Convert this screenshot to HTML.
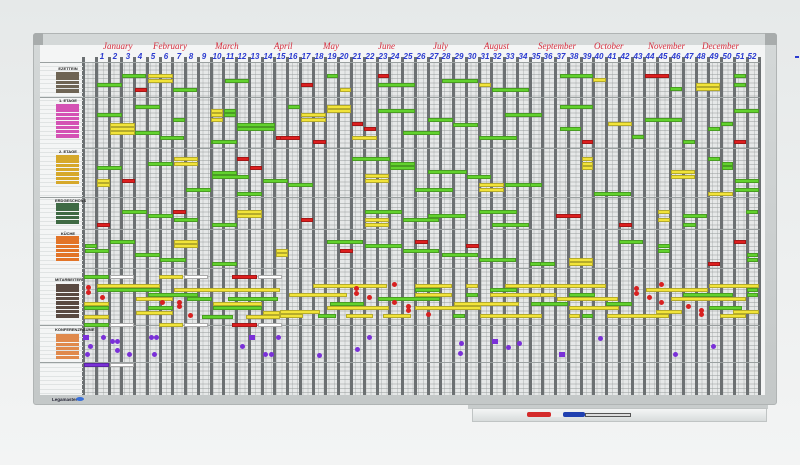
<!DOCTYPE html>
<html><head><meta charset="utf-8">
<style>
*{margin:0;padding:0;box-sizing:border-box}
body{width:800px;height:465px;overflow:hidden;background:linear-gradient(#e6e9e9,#eef0f0 60%,#f3f4f4);position:relative;font-family:"Liberation Sans",sans-serif}
.abs{position:absolute}
#frame{left:33px;top:33px;width:744px;height:372px;background:linear-gradient(#d4d8d8,#c4c8c8);border:1px solid #b0b4b4;border-radius:3px}
#board{left:40px;top:45px;width:725px;height:350px;background:#f4f5f5}
#grid{left:83px;top:62px;width:677px;height:333px;
background:
 repeating-linear-gradient(90deg,transparent 0,transparent 4.25px,rgba(150,155,155,.35) 4.25px,rgba(150,155,155,.35) 5.25px),
 repeating-linear-gradient(180deg,transparent 0,transparent 3.3px,rgba(140,145,145,.45) 3.3px,rgba(140,145,145,.45) 4.3px),
 #e6e8e8}
.vl{position:absolute;top:57px;width:3px;height:338px;background:#6c7072}
.hl{position:absolute;left:40px;width:720px;height:1px;background:#9aa0a0}
.b{position:absolute;height:4px;border:1px solid rgba(0,0,0,.25)}
.g{background:#62d22e}.y{background:#f2e43a}.r{background:#dd1f1f}
.d{position:absolute;width:5px;height:5px;border-radius:50%;background:#d82020}
.p{position:absolute;width:5px;height:5px;border-radius:50%;background:#7a30d8}
.tag{position:absolute;height:4px;background:#fff;border:1px solid #aaa}
.m{position:absolute;top:41px;color:#d62a3a;font:italic 9px "Liberation Serif",serif;white-space:nowrap}
.n{position:absolute;top:52px;width:12px;text-align:center;color:#2a3ad0;font:italic bold 8px "Liberation Sans",sans-serif}
.lt{position:absolute;left:55px;width:26px;text-align:center;font:bold 4px "Liberation Sans",sans-serif;color:#222}
.lb{position:absolute;left:56px;width:23px;height:3.5px}
</style></head><body>
<div class="abs" id="frame"></div>
<div class="abs" style="left:33px;top:33px;width:10px;height:12px;background:#a8acac;border-radius:3px 0 0 0"></div>
<div class="abs" style="left:765px;top:33px;width:12px;height:12px;background:#a8acac;border-radius:0 3px 0 0"></div>
<div class="abs" id="board"></div>
<div class="abs" id="grid"></div>
<div id="lines"></div>

<div class="m" style="left:103px">January</div>
<div class="m" style="left:153px">February</div>
<div class="m" style="left:215px">March</div>
<div class="m" style="left:274px">April</div>
<div class="m" style="left:323px">May</div>
<div class="m" style="left:378px">June</div>
<div class="m" style="left:433px">July</div>
<div class="m" style="left:484px">August</div>
<div class="m" style="left:538px">September</div>
<div class="m" style="left:594px">October</div>
<div class="m" style="left:648px">November</div>
<div class="m" style="left:702px">December</div>

<div id="nums">
<div class="n" style="left:96px">1</div><div class="n" style="left:109px">2</div><div class="n" style="left:122px">3</div><div class="n" style="left:134px">4</div><div class="n" style="left:147px">5</div><div class="n" style="left:160px">6</div><div class="n" style="left:173px">7</div><div class="n" style="left:185px">8</div><div class="n" style="left:198px">9</div><div class="n" style="left:211px">10</div><div class="n" style="left:224px">11</div><div class="n" style="left:236px">12</div><div class="n" style="left:249px">13</div><div class="n" style="left:262px">14</div><div class="n" style="left:275px">15</div><div class="n" style="left:287px">16</div><div class="n" style="left:300px">17</div><div class="n" style="left:313px">18</div><div class="n" style="left:326px">19</div><div class="n" style="left:338px">20</div><div class="n" style="left:351px">21</div><div class="n" style="left:364px">22</div><div class="n" style="left:377px">23</div><div class="n" style="left:389px">24</div><div class="n" style="left:402px">25</div><div class="n" style="left:415px">26</div><div class="n" style="left:428px">27</div><div class="n" style="left:440px">28</div><div class="n" style="left:453px">29</div><div class="n" style="left:466px">30</div><div class="n" style="left:479px">31</div><div class="n" style="left:491px">32</div><div class="n" style="left:504px">33</div><div class="n" style="left:517px">34</div><div class="n" style="left:530px">35</div><div class="n" style="left:542px">36</div><div class="n" style="left:555px">37</div><div class="n" style="left:568px">38</div><div class="n" style="left:581px">39</div><div class="n" style="left:593px">40</div><div class="n" style="left:606px">41</div><div class="n" style="left:619px">42</div><div class="n" style="left:632px">43</div><div class="n" style="left:644px">44</div><div class="n" style="left:657px">45</div><div class="n" style="left:670px">46</div><div class="n" style="left:683px">47</div><div class="n" style="left:695px">48</div><div class="n" style="left:708px">49</div><div class="n" style="left:721px">50</div><div class="n" style="left:734px">51</div><div class="n" style="left:746px">52</div>
</div>

<div class="lt" style="top:66px">EZETTEIN</div>
<div class="lt" style="top:98px">1. ETAGE</div>
<div class="lt" style="top:149px">2. ETAGE</div>
<div class="lt" style="top:198px">ERDGESCHOSS</div>
<div class="lt" style="top:231px">KÜCHE</div>
<div class="lt" style="top:277px">MITARBEITER</div>
<div class="lt" style="top:327px">KONFERENZRÄUME</div>
<div id="labels"></div>

<div class="abs" style="left:52px;top:397px;font:bold 4.5px 'Liberation Sans',sans-serif;color:#223">Legamaster</div>
<div class="abs" style="left:76px;top:397px;width:8px;height:4px;border-radius:50%;background:#3a70d8"></div>

<div class="abs" style="left:468px;top:405px;width:300px;height:4px;background:#c8cccc"></div>
<div class="abs" style="left:472px;top:408px;width:295px;height:14px;background:linear-gradient(#f4f5f5,#d8dcdc);border:1px solid #c0c4c4"></div>
<div class="abs" style="left:527px;top:412px;width:24px;height:5px;background:#d42a2a;border-radius:2px"></div>
<div class="abs" style="left:551px;top:413px;width:12px;height:4px;background:#eee"></div>
<div class="abs" style="left:563px;top:412px;width:22px;height:5px;background:#2040b0;border-radius:2px"></div>
<div class="abs" style="left:585px;top:413px;width:46px;height:4px;background:#ddd;border:1px solid #555"></div>
<div class="abs" style="left:795px;top:56px;width:4px;height:2px;background:#2a3ad0"></div>
<div id="items"></div>

<script>
var L=document.getElementById('lines'),h='';
for(var k=0;k<=53;k++){h+='<div class="vl" style="left:'+(82+k*12.76).toFixed(1)+'px"></div>';}
[62,97,148,197,229,268,325,362].forEach(function(y){h+='<div class="hl" style="top:'+y+'px"></div>';});
for(var y=66;y<395;y+=4.3){h+='<div class="abs" style="left:40px;top:'+y.toFixed(1)+'px;width:43px;height:1px;background:#e0e3e3"></div>';}
L.innerHTML=h;
var lb='';
function grp(y0,n,c){for(var i=0;i<n;i++)lb+='<div class="lb" style="top:'+(y0+i*4.3).toFixed(1)+'px;background:'+c+'"></div>';}
grp(72,5,'#6e6454');grp(104,8,'#d452b4');grp(155,7,'#d6a82a');grp(203,5,'#3f6a44');grp(236,6,'#e27428');grp(284,8,'#5a4a42');grp(334,6,'#e0894c');
document.getElementById('labels').innerHTML=lb;
var B=[
['r',645,74,24],['g',734,74,12],['g',122,74,24],['y',148,74,25],['y',148,79,25],['g',225,79,24],['g',97,83,25],['r',135,88,12],['g',173,88,24],
['g',327,74,11],['r',378,74,11],['r',301,83,12],['g',378,83,37],['g',442,79,36],['y',479,83,12],['g',492,88,37],['y',340,88,11],
['g',560,74,33],['y',593,78,13],['g',734,83,12],['g',670,87,12],['y',696,83,24],['y',696,87,24],
['g',135,105,25],['y',211,109,12],['y',211,113,12],['y',211,118,12],['g',224,109,12],['g',224,113,12],['g',97,113,25],['g',173,118,12],
['y',110,123,25],['y',110,127,25],['y',110,131,25],['g',237,123,38],['g',237,127,38],['g',135,131,25],['g',160,136,24],['g',211,140,25],['r',276,136,12],
['g',288,105,12],['y',327,105,24],['y',327,109,24],['g',378,109,37],['y',301,113,25],['y',301,118,25],['g',428,118,25],['g',453,123,25],['g',505,113,37],['r',352,122,11],['r',364,127,12],['g',403,131,37],['r',280,136,20],['y',352,136,25],['g',479,136,38],
['g',560,105,33],['y',608,122,24],['g',645,118,37],['g',734,109,25],['g',721,122,12],['g',708,127,12],['g',560,127,21],['g',632,135,12],['r',582,140,11],['g',683,140,12],['r',734,140,12],
['g',212,140,25],['g',97,166,25],['g',148,162,25],['y',174,157,24],['y',174,162,24],['r',237,157,12],['r',250,166,12],['g',212,171,25],['g',212,175,37],['y',97,179,13],['y',97,183,13],['r',122,179,13],['g',263,179,25],['g',186,188,25],['g',237,192,25],
['r',313,140,13],['g',352,157,38],['g',390,162,25],['g',390,166,25],['y',365,174,24],['y',365,179,24],['g',428,170,39],['g',467,175,24],['g',288,183,25],['g',415,188,38],['y',479,183,25],['y',479,188,25],['g',505,183,37],
['y',582,157,11],['y',582,162,11],['y',582,166,11],['g',708,157,12],['g',722,162,11],['g',722,166,11],['y',671,170,24],['y',671,175,24],['g',735,179,24],['g',735,188,24],['g',594,192,37],['y',708,192,25],['g',530,183,12],
['g',122,210,25],['r',173,210,13],['g',148,214,25],['g',174,218,24],['y',237,210,25],['y',237,214,25],['r',97,223,13],['g',212,223,25],['g',110,240,25],['y',174,240,24],['y',174,244,24],['g',85,244,12],['g',85,249,24],['g',135,253,25],['g',160,258,26],['g',212,262,25],['y',276,249,12],['y',276,253,12],
['g',365,210,37],['g',428,214,38],['g',403,218,36],['y',365,218,24],['y',365,223,24],['r',301,218,12],['g',479,210,38],['g',492,223,37],['r',557,214,12],['g',327,240,36],['r',415,240,13],['r',340,249,13],['g',365,244,37],['g',403,249,36],['r',466,244,13],['g',442,253,36],['g',479,258,37],['g',530,262,25],
['r',556,214,25],['y',658,210,12],['y',658,218,12],['g',683,214,24],['g',683,223,13],['g',746,210,12],['r',619,223,13],['g',619,240,24],['g',658,244,12],['g',658,249,12],['r',734,240,12],['g',747,253,11],['g',747,258,11],['y',569,258,24],['y',569,262,24],['g',540,262,15],['r',708,262,12],
['g',84,275,25],['y',159,275,24],['r',232,275,25],['g',84,323,25],['y',159,323,24],['r',232,323,25],
['y',97,284,63],['g',97,288,63],['y',174,288,106],['g',148,293,50],['y',136,297,37],['g',187,297,25],['g',228,297,50],['y',84,302,25],['y',213,302,49],['g',84,306,25],['g',148,306,25],['g',213,306,49],['y',136,311,37],['y',263,311,17],['y',84,315,25],['g',202,315,31],['y',246,315,34],
['y',313,284,74],['y',415,284,37],['y',466,284,12],['y',505,284,55],['g',490,288,27],['g',415,288,25],['y',289,293,58],['y',415,293,37],['g',466,293,12],['y',490,293,66],['g',378,297,62],['g',330,302,34],['y',454,302,65],['g',531,302,29],['y',327,306,62],['y',415,306,66],['y',280,310,40],['y',280,314,23],['g',318,314,18],['y',346,314,27],['y',383,314,28],['g',453,314,12],['y',480,314,62],
['y',540,284,66],['y',709,284,50],['y',540,293,15],['g',569,293,26],['y',646,288,62],['g',683,293,50],['g',747,288,11],['g',747,293,11],['y',557,297,61],['y',671,297,75],['g',540,302,28],['g',606,302,26],['y',569,306,50],['g',709,306,33],['y',656,310,26],['y',733,310,26],['y',569,314,11],['g',582,314,11],['y',607,314,62],['y',720,314,26],
['pb',84,363,25]
];
var out='';
B.forEach(function(b){var c=b[0]=='pb'?'background:#7a30d8':'';out+='<div class="b '+(b[0]=='pb'?'':b[0])+'" style="left:'+b[1]+'px;top:'+b[2]+'px;width:'+b[3]+'px;'+c+'"></div>';});
[[110,275,24],[184,275,24],[258,275,24],[110,323,24],[184,323,24],[258,323,24],[110,363,24]].forEach(function(t){out+='<div class="tag" style="left:'+t[0]+'px;top:'+t[1]+'px;width:'+t[2]+'px"></div>';});
[[88,287],[88,292],[102,297],[162,302],[179,302],[179,306],[190,315],[394,284],[356,288],[356,293],[369,297],[394,302],[408,306],[408,310],[428,314],[661,284],[636,288],[636,293],[649,297],[661,302],[688,306],[701,310],[701,314]].forEach(function(d){out+='<div class="d" style="left:'+(d[0]-2)+'px;top:'+(d[1]-2)+'px"></div>';});
[[103,337],[112,341],[117,341],[151,337],[156,337],[90,346],[117,350],[87,354],[129,354],[154,354],[242,346],[265,354],[271,354],[278,337],[319,355],[357,349],[369,337],[461,343],[508,347],[460,353],[519,343],[600,338],[713,346],[675,354]].forEach(function(d){out+='<div class="p" style="left:'+(d[0]-2)+'px;top:'+(d[1]-2)+'px"></div>';});
[[85,337],[494,341],[561,354],[251,337]].forEach(function(d){out+='<div class="p" style="border-radius:0;width:6px;left:'+(d[0]-2)+'px;top:'+(d[1]-2)+'px"></div>';});
document.getElementById('items').innerHTML=out;
</script>
</body></html>
